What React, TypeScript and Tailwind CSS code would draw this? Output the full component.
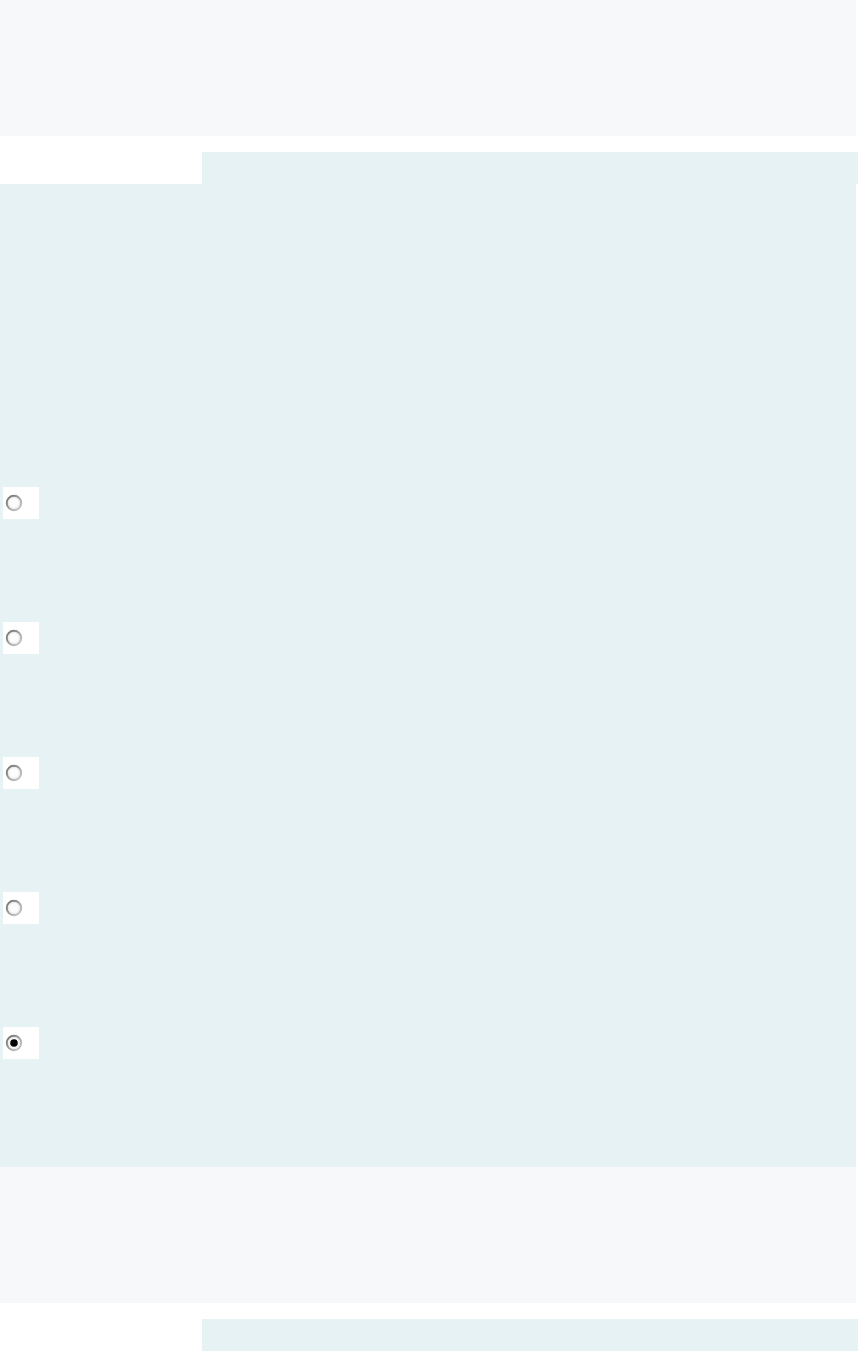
import React from "react";

function Radio({ checked }: { checked?: boolean }) {
  const id = checked ? "rg1" : "rg0";
  return (
    <div className="w-[36px] h-[32px] bg-white flex items-center pl-[2px]">
      <svg width="18" height="18" viewBox="0 0 18 18">
        <defs>
          <linearGradient id={id} x1="0" y1="0" x2="1" y2="1">
            <stop offset="0" stopColor="#6e6e6e" />
            <stop offset="1" stopColor="#cfcfcf" />
          </linearGradient>
        </defs>
        <circle cx="9" cy="9" r="7.2" fill="#fdfdfd" stroke={`url(#${id})`} strokeWidth="2" />
        <circle cx="9" cy="9" r="5.4" fill="none" stroke="#e6e6e6" strokeWidth="1" />
        {checked && <circle cx="9" cy="9" r="3.8" fill="#000" />}
      </svg>
    </div>
  );
}

export default function App() {
  return (
    <div className="w-[858px] bg-white" style={{ fontFamily: '"Liberation Sans", sans-serif' }}>
      <div className="h-[136px] w-[856px] bg-[#f7f8f9]" />
      <div className="mt-4 ml-[202px] w-[656px] h-8 bg-[#e6f2f4]" />
      <div className="w-[856px] h-[983px] bg-[#e6f2f4] pt-[303px] flex flex-col gap-[103px]">
        <div className="pl-[3px]"><Radio /></div>
        <div className="pl-[3px]"><Radio /></div>
        <div className="pl-[3px]"><Radio /></div>
        <div className="pl-[3px]"><Radio /></div>
        <div className="pl-[3px]"><Radio checked /></div>
      </div>
      <div className="h-[136px] w-[856px] bg-[#f7f8f9]" />
      <div className="mt-4 ml-[202px] w-[656px] h-8 bg-[#e6f2f4]" />
    </div>
  );
}
